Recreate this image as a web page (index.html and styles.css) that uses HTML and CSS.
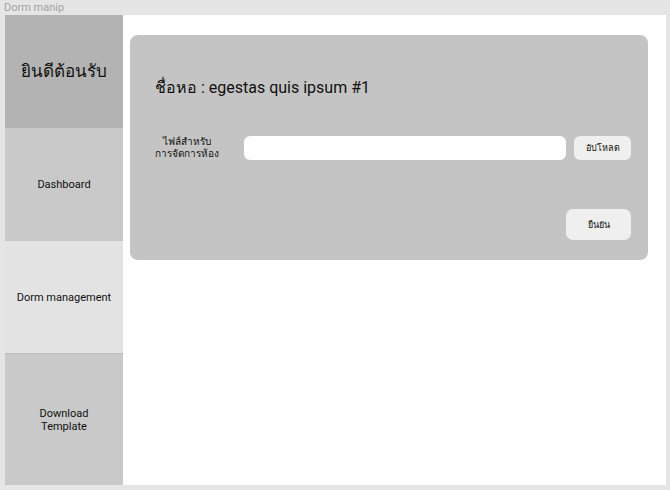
FILE: index.html
```html
<!DOCTYPE html>
<html lang="th">
<head>
<meta charset="utf-8">
<title>Dorm manip</title>
<link rel="stylesheet" href="styles.css">
</head>
<body>
<div class="app">
  <div class="app-title">Dorm manip</div>
  <div class="frame">
    <nav class="sidebar">
      <div class="side-head">ยินดีต้อนรับ</div>
      <div class="side-item item-dash">Dashboard</div>
      <div class="side-item item-active">Dorm management</div>
      <div class="side-item item-dl">Download<br>Template</div>
    </nav>
    <main class="main">
      <section class="card">
        <h1 class="card-title">ชื่อหอ : egestas quis ipsum #1</h1>
        <div class="file-row">
          <div class="file-label">ไฟล์สำหรับ<br>การจัดการห้อง</div>
          <div class="file-input"></div>
          <button class="btn btn-upload">อัปโหลด</button>
        </div>
        <div class="confirm-row">
          <button class="btn btn-confirm">ยืนยัน</button>
        </div>
      </section>
    </main>
  </div>
</div>
</body>
</html>
```
FILE: styles.css
```css
* { box-sizing: border-box; }
html, body { margin: 0; padding: 0; }
body {
  background: #e5e5e5;
  font-family: Roboto, "Noto Sans", "DejaVu Sans", sans-serif;
  width: 670px;
  height: 490px;
  overflow: hidden;
}
.app { padding: 0 4px 0 5px; }
.app-title {
  height: 15px;
  font-size: 11px;
  line-height: 15px;
  color: #a3a3a3;
  margin-left: -1px;
}
.frame {
  display: flex;
  width: 661px;
  height: 470px;
  background: #ffffff;
}
.sidebar {
  width: 118px;
  display: flex;
  flex-direction: column;
}
.side-head {
  height: 113px;
  background: #b3b3b3;
  display: flex;
  align-items: center;
  justify-content: center;
  font-size: 17px;
  color: #111;
  padding-bottom: 2px;
}
.side-item {
  display: flex;
  align-items: center;
  justify-content: center;
  text-align: center;
  font-size: 11px;
  line-height: 13px;
  color: #111;
}
.item-dash { height: 113px; background: #c9c9c9; }
.item-active { height: 112px; background: #e3e3e3; }
.item-dl { flex: 1; background: #c9c9c9; border-top: 1px solid #bdbdbd; }
.main {
  flex: 1;
  padding: 20px 18px 0 7px;
}
.card {
  background: #c4c4c4;
  border-radius: 8px;
  height: 225px;
  padding: 41px 17px 0 25px;
}
.card-title {
  margin: 0;
  font-weight: normal;
  font-size: 16px;
  line-height: 24px;
  color: #111;
}
.file-row {
  display: flex;
  align-items: center;
  margin-top: 36px;
}
.file-label {
  width: 63px;
  margin-right: 26px;
  white-space: nowrap;
  font-size: 10px;
  line-height: 12px;
  text-align: center;
  color: #111;
  display: flex;
  flex-direction: column;
  align-items: center;
}
.file-input {
  width: 322px;
  height: 24px;
  background: #fff;
  border-radius: 6px;
}
.btn {
  border: none;
  background: #efefef;
  font-family: inherit;
  color: #111;
  padding: 0;
  border-radius: 6px;
}
.btn-upload {
  margin-left: 8px;
  width: 57px;
  height: 24px;
  font-size: 9px;
}
.confirm-row {
  display: flex;
  justify-content: flex-end;
  margin-top: 49px;
}
.btn-confirm {
  width: 65px;
  height: 31px;
  font-size: 9px;
  border-radius: 7px;
}
```
